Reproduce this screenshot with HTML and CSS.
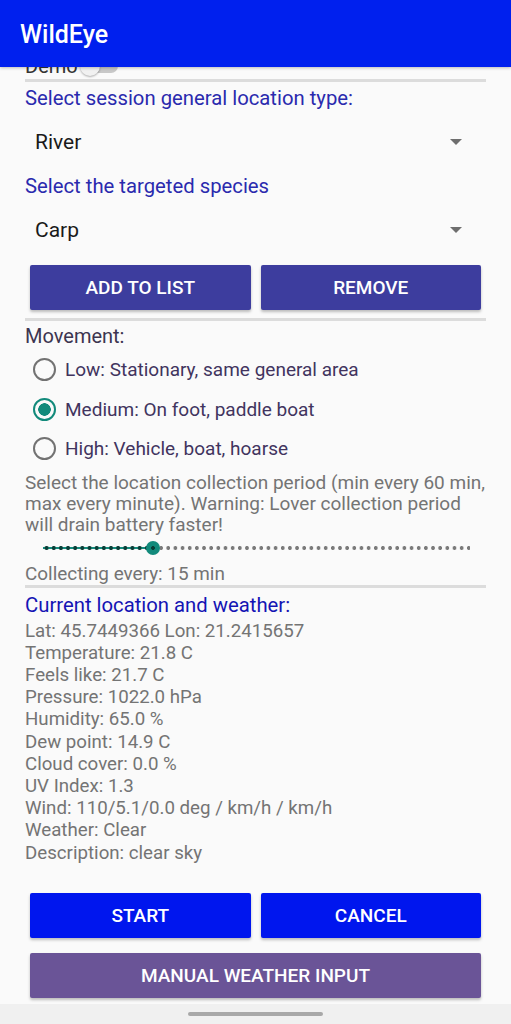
FILE: index.html
```html
<!DOCTYPE html>
<html>
  <head>
    <title>WildEye</title>
    <link rel="stylesheet" href="styles.css">
  </head>
  <body>
    <header class="appbar">
      <h1 class="appbar_title">WildEye</h1>
    </header>

    <main class="content">
      <div class="demo_row">
        <span class="demo_label">Demo</span>
        <span class="switch"><span class="switch_thumb"></span></span>
      </div>
      <hr class="divider"/>

      <p class="heading">Select session general location type:</p>
      <div class="spinner">
        <span>River</span>
        <span class="spinner_arrow"></span>
      </div>

      <p class="heading">Select the targeted species</p>
      <div class="spinner">
        <span>Carp</span>
        <span class="spinner_arrow"></span>
      </div>

      <div class="button_row">
        <button class="btn btn_indigo">ADD TO LIST</button>
        <button class="btn btn_indigo">REMOVE</button>
      </div>
      <hr class="divider"/>

      <p class="movement_label">Movement:</p>
      <div class="radio_group">
        <label class="radio"><span class="radio_circle"></span>Low: Stationary, same general area</label>
        <label class="radio"><span class="radio_circle checked"></span>Medium: On foot, paddle boat</label>
        <label class="radio"><span class="radio_circle"></span>High: Vehicle, boat, hoarse</label>
      </div>

      <p class="note">Select the location collection period (min every 60 min, max every minute). Warning: Lover collection period will drain battery faster!</p>

      <div class="slider">
        <div class="slider_track">
          <div class="slider_active" style="width: 108px"></div>
          <div class="slider_thumb" style="left: 108px"></div>
        </div>
      </div>

      <p class="note collecting">Collecting every: 15 min</p>
      <hr class="divider"/>

      <p class="heading heading_strong">Current location and weather:</p>
      <div class="weather">
        <p>Lat: 45.7449366 Lon: 21.2415657</p>
        <p>Temperature: 21.8 C</p>
        <p>Feels like: 21.7 C</p>
        <p>Pressure: 1022.0 hPa</p>
        <p>Humidity: 65.0 %</p>
        <p>Dew point: 14.9 C</p>
        <p>Cloud cover: 0.0 %</p>
        <p>UV Index: 1.3</p>
        <p>Wind: 110/5.1/0.0 deg / km/h / km/h</p>
        <p>Weather: Clear</p>
        <p>Description: clear sky</p>
      </div>

      <div class="button_row bottom_row">
        <button class="btn btn_blue">START</button>
        <button class="btn btn_blue">CANCEL</button>
      </div>
      <button class="btn btn_purple btn_wide">MANUAL WEATHER INPUT</button>
    </main>

    <div class="navbar"><span class="nav_handle"></span></div>
  </body>
</html>
```

FILE: styles.css
```css
body
{
  margin: 0;
  background: #fafafa;
  font-family: Roboto, "Noto Sans", sans-serif;
  height: 1024px;
  overflow: hidden;
  display: flex;
  flex-direction: column;
}
p
{
  margin: 0;
}

.appbar
{
  position: relative;
  z-index: 1;
  height: 67px;
  background: #0020ee;
  display: flex;
  align-items: center;
  padding-left: 20px;
  box-shadow: 0 1px 3px rgba(0,0,0,0.25);
}
.appbar_title
{
  margin: 0;
  color: #fff;
  font-size: 25px;
  font-weight: 500;
  padding-top: 1px;
}

.content
{
  flex: 1;
  padding: 0 25px 0 25px;
}

.demo_row
{
  margin-top: -14px;
  height: 26px;
  display: flex;
  align-items: center;
  font-size: 20px;
  color: #333;
}
.switch
{
  position: relative;
  display: inline-block;
  width: 34px;
  height: 14px;
  border-radius: 7px;
  background: #c8c8c8;
  margin-left: 6px;
}
.switch_thumb
{
  position: absolute;
  left: -4px;
  top: -3px;
  width: 20px;
  height: 20px;
  border-radius: 50%;
  background: #f1f1f1;
  box-shadow: 0 1px 2px rgba(0,0,0,0.3);
}

.divider
{
  border: none;
  height: 3px;
  background: #dcdcdc;
  margin: 0;
  width: 461px;
}

.heading
{
  color: #2a2aae;
  font-size: 20.3px;
  height: 30px;
  line-height: 30px;
  margin-top: 1px;
}
.heading_strong
{
  color: #1414b4;
  margin-top: 2px;
  height: 30px;
}

.spinner
{
  height: 44px;
  margin: 7px 0 7px 0;
  padding: 0 24px 0 10px;
  display: flex;
  align-items: center;
  justify-content: space-between;
  font-size: 21px;
  color: #1a1a1a;
}
.spinner_arrow
{
  width: 0;
  height: 0;
  border-left: 6px solid transparent;
  border-right: 6px solid transparent;
  border-top: 6px solid #6e6e6e;
}

.button_row
{
  display: flex;
  gap: 10px;
  padding: 0 5px;
  margin-top: 13px;
}
.btn
{
  flex: 1;
  height: 45px;
  border: none;
  border-radius: 2px;
  color: #fff;
  font-family: Roboto, "Noto Sans", sans-serif;
  font-size: 19px;
  font-weight: 500;
  box-shadow: 0 2px 3px rgba(0,0,0,0.25);
}
.btn_indigo
{
  background: #3d3d9e;
}
.btn_blue
{
  background: #0016ee;
}
.btn_purple
{
  background: #6a5497;
}
.btn_wide
{
  display: block;
  width: 451px;
  margin: 15px 0 0 5px;
}
.button_row + .divider
{
  margin-top: 8px;
}

.movement_label
{
  font-size: 20px;
  color: #3c3550;
  height: 29px;
  line-height: 31px;
}
.radio_group
{
  display: flex;
  flex-direction: column;
}
.radio
{
  height: 39.5px;
  display: flex;
  align-items: center;
  font-size: 19px;
  color: #41345e;
}
.radio_circle
{
  box-sizing: border-box;
  width: 23px;
  height: 23px;
  border-radius: 50%;
  border: 2px solid #727272;
  margin: 0 9px 0 8px;
  background: #fafafa;
}
.radio_circle.checked
{
  border-color: #128a7b;
  background: radial-gradient(circle, #128a7b 0 6px, #fafafa 6.5px);
}

.note
{
  font-size: 19px;
  line-height: 21px;
  color: #747474;
}
.radio_group + .note
{
  margin-top: 3px;
}
.collecting
{
  font-size: 18.9px;
  height: 24px;
  line-height: 25px;
}

.slider
{
  height: 26px;
  display: flex;
  align-items: center;
  padding: 0 16px 0 18px;
}
.slider_track
{
  position: relative;
  flex: 1;
  height: 4px;
  background: radial-gradient(circle, #7a7a7a 0 1.7px, transparent 2.2px) 0 0 / 7.17px 4px repeat-x;
}
.slider_active
{
  position: absolute;
  left: 0;
  top: 0;
  height: 4px;
  background:
    radial-gradient(circle, #0a3f38 0 1.7px, transparent 2.2px) 0 0 / 7.17px 4px repeat-x,
    linear-gradient(#128a7b, #128a7b) 0 1px / 100% 2px no-repeat;
}
.slider_thumb
{
  position: absolute;
  top: -5px;
  width: 14px;
  height: 14px;
  margin-left: -5px;
  border-radius: 50%;
  background: radial-gradient(circle, #0a3f38 0 1.7px, #128a7b 2.2px);
}

.weather p
{
  font-size: 18.7px;
  line-height: 22.2px;
  color: #747474;
}

.bottom_row
{
  margin-top: 29px;
}

.navbar
{
  height: 20px;
  background: #f0f0f0;
  display: flex;
  align-items: center;
  justify-content: center;
}
.nav_handle
{
  width: 135px;
  height: 4px;
  border-radius: 2px;
  background: #a8a8a8;
}
```
